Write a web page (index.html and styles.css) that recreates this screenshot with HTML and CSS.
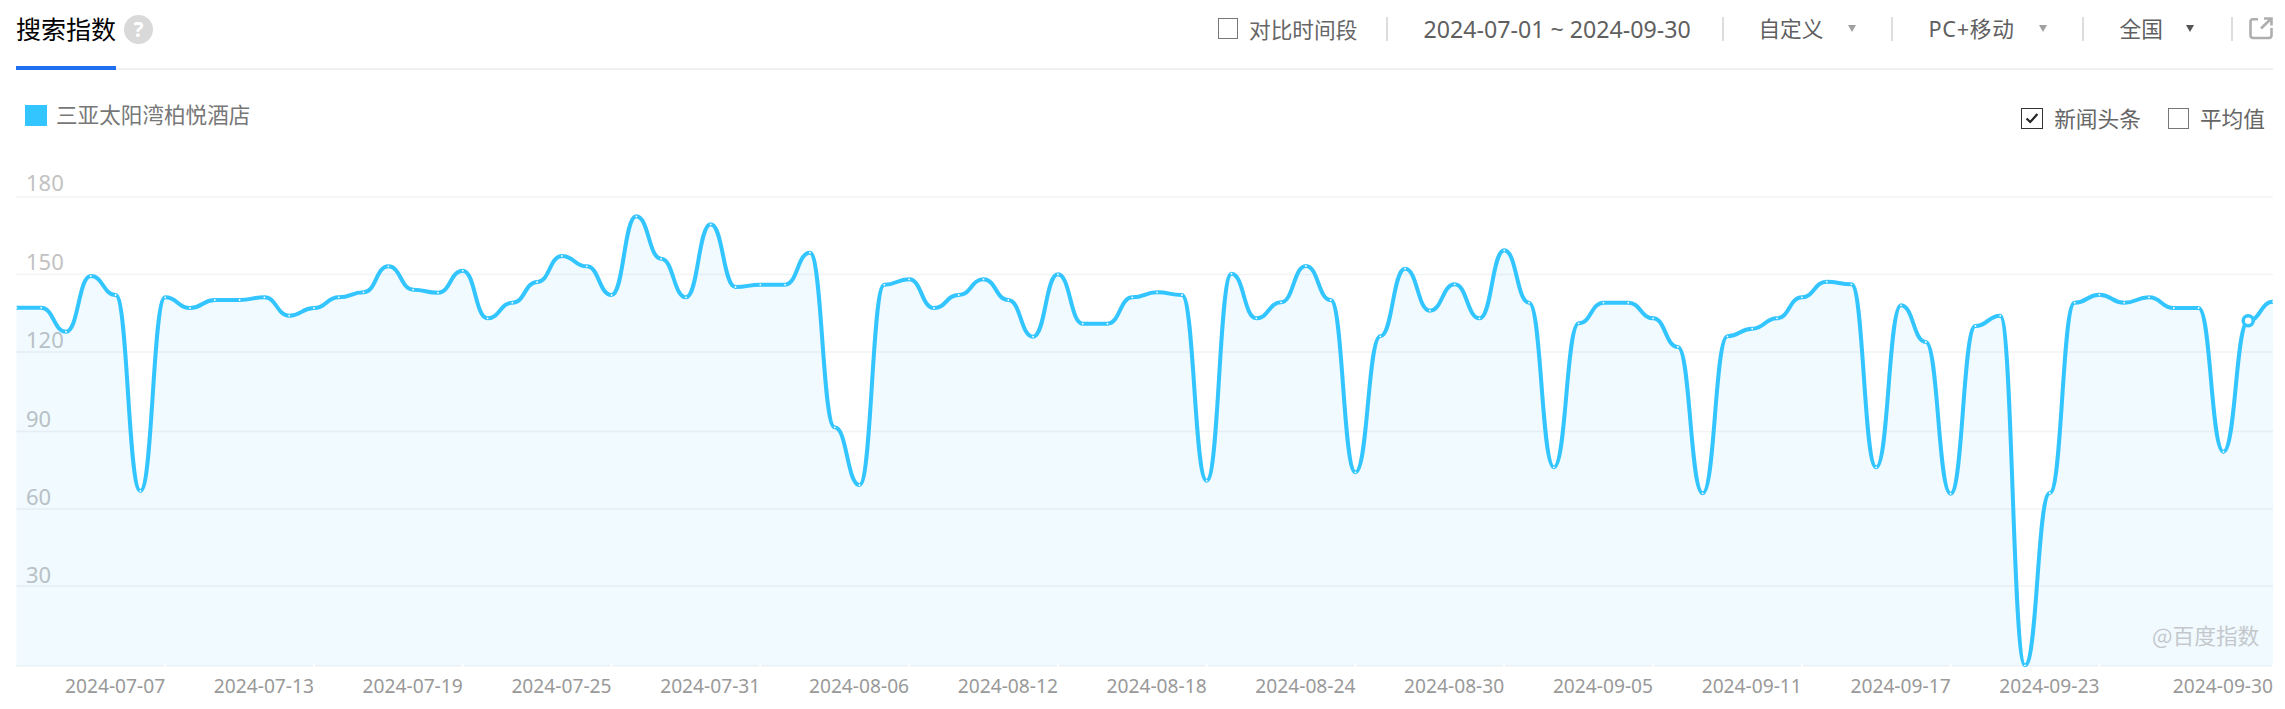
FILE: index.html
```html
<!DOCTYPE html>
<html lang="zh-CN">
<head>
<meta charset="utf-8">
<title>搜索指数</title>
<link rel="stylesheet" href="styles.css">
</head>
<body>
<div class="page">
  <header class="head">
    <div class="tab">搜索指数</div>
    <span class="help">?</span>
    <div class="controls">
      <span class="box"></span>
      <span class="ctl-label">对比时间段</span>
      <span class="sep sep-a"></span>
      <span class="date">2024-07-01 ~ 2024-09-30</span>
      <span class="sep sep-b"></span>
      <span class="ctl-text">自定义</span>
      <span class="caret"></span>
      <span class="sep sep-c"></span>
      <span class="ctl-text ctl-wide">PC+移动</span>
      <span class="caret"></span>
      <span class="sep sep-c"></span>
      <span class="ctl-text">全国</span>
      <span class="caret caret-dark"></span>
      <span class="sep sep-d"></span>
      <svg class="share" viewBox="0 0 24 23" width="24" height="23">
        <path class="share-line" d="M9 2.2H4A2.5 2.5 0 0 0 1.5 4.7V18.5A2.5 2.5 0 0 0 4 21H20A2.5 2.5 0 0 0 22.5 18.5V11"/>
        <path class="share-line" d="M12 11.5L22 1.8M15 1.5H22.5V8.5"/>
      </svg>
    </div>
  </header>
  <div class="legend-row">
    <div class="legend">
      <span class="swatch"></span>
      <span class="legend-text">三亚太阳湾柏悦酒店</span>
    </div>
    <div class="options">
      <span class="box box-dark">
        <svg viewBox="0 0 20 20" width="18" height="18"><path class="tick" d="M4 10.5L8 14.5L16 5.5"/></svg>
      </span>
      <span class="opt-text">新闻头条</span>
      <span class="box box-second"></span>
      <span class="opt-text">平均值</span>
    </div>
  </div>
  <svg id="chart" class="chart" viewBox="16 160 2257 549" width="2257" height="549">
    <g class="grid">
      <line x1="16" x2="2273" y1="197" y2="197"/>
      <line x1="16" x2="2273" y1="274.5" y2="274.5"/>
      <line x1="16" x2="2273" y1="352" y2="352"/>
      <line x1="16" x2="2273" y1="431.5" y2="431.5"/>
      <line x1="16" x2="2273" y1="509" y2="509"/>
      <line x1="16" x2="2273" y1="586" y2="586"/>
      <line x1="16" x2="2273" y1="666" y2="666"/>
    </g>
    <g class="ylabels">
      <text x="26" y="191">180</text>
      <text x="26" y="270">150</text>
      <text x="26" y="347.5">120</text>
      <text x="26" y="427">90</text>
      <text x="26" y="505">60</text>
      <text x="26" y="582.5">30</text>
    </g>
    <path id="area" class="area"/>
    <path id="line" class="line"/>
    <g id="dots" class="dots"></g>
    <text class="mark" x="2152" y="644">@百度指数</text>
    <g id="xlabels" class="xlabels"></g>
  </svg>
</div>
<script src="script.js"></script>
</body>
</html>
```
FILE: styles.css
```css
* { box-sizing: border-box; }
html, body { margin: 0; padding: 0; background: #fff; }
body { font-family: "Noto Sans", "Noto Sans CJK SC", sans-serif; color: #666; overflow: hidden; }
.page { width: 2285px; height: 709px; padding: 0 12px 0 16px; }

.head { display: flex; align-items: center; height: 70px; border-bottom: 2px solid #f0f0f0; }
.tab { width: 100px; height: 70px; margin-bottom: -2px; padding-top: 10px; font-size: 25px; line-height: 36px; color: #000; border-bottom: 4px solid #1f6ff0; font-family: "Noto Sans CJK SC", sans-serif; }
.help { display: block; width: 29px; height: 29px; margin: -9px 0 0 8px; border-radius: 50%; background: #d9d9d9; color: #fff; font-size: 21px; font-weight: 700; line-height: 29px; text-align: center; }

.controls { display: flex; align-items: center; margin-left: auto; height: 24px; margin-top: -11px; }
.box { display: flex; align-items: center; justify-content: center; width: 20px; height: 21px; border: 1.5px solid #777; background: #fff; }
.box-dark { width: 22px; border-color: #333; }
.box-second { margin-left: 27px; width: 21px; }
.ctl-label { margin-left: 11px; font-size: 21.7px; line-height: 30px; white-space: nowrap; font-family: "Noto Sans CJK SC", sans-serif; }
.sep { width: 2px; height: 24px; background: #ddd; }
.sep-a { margin-left: 29px; margin-right: 35px; }
.sep-b { margin-left: 31px; margin-right: 34px; }
.sep-c { margin-left: 35px; margin-right: 36px; }
.sep-d { margin-left: 37px; margin-right: 16px; }
.date { width: 268px; font-size: 23.2px; line-height: 30px; white-space: nowrap; color: #5f5f5f; }
.ctl-text { font-size: 21.7px; line-height: 30px; white-space: nowrap; color: #5f5f5f; }
.ctl-wide { letter-spacing: 0.7px; }
.caret { width: 0; height: 0; margin-left: 24px; border-left: 4px solid transparent; border-right: 4px solid transparent; border-top: 7px solid #a0a0a0; }
.caret-dark { margin-left: 23px; border-top-color: #555; }
.share { display: block; }
.share-line { fill: none; stroke: #aeaeae; stroke-width: 2.6; }

.legend-row { display: flex; justify-content: space-between; height: 90px; }
.legend { display: flex; align-items: center; height: 30px; margin-top: 30px; padding-left: 9px; }
.swatch { width: 22px; height: 21px; background: #33c5ff; }
.legend-text { margin: -2px 0 0 9px; font-size: 21.6px; line-height: 30px; color: #777; white-space: nowrap; font-family: "Noto Sans CJK SC", sans-serif; }
.options { display: flex; align-items: center; height: 30px; margin-top: 33px; margin-right: 8px; }
.opt-text { margin-left: 11px; font-size: 21.7px; line-height: 30px; color: #666; white-space: nowrap; font-family: "Noto Sans CJK SC", sans-serif; }
.tick { fill: none; stroke: #222; stroke-width: 2.4; }

.chart { display: block; overflow: hidden; }
.grid line { stroke: #f2f3f4; stroke-width: 1.6; }
.ylabels text { font-size: 22px; fill: #c2c2c2; }
.area { fill: rgba(60, 180, 255, 0.07); stroke: none; }
.line { fill: none; stroke: #33c5ff; stroke-width: 4; stroke-linejoin: round; }
.dots circle { fill: #fff; }
.dots .hot { fill: #fff; stroke: #33c5ff; stroke-width: 3.5; }
.mark { font-size: 21.7px; fill: #c4c8cc; font-family: "Noto Sans CJK SC", sans-serif; }
.xlabels text { font-size: 19.2px; fill: #999; text-anchor: end; }
.xlabels .gap { stroke: #fff; stroke-width: 2; }
```
FILE: script.js
```js
var ys = [
  307.7,307.7,331.7,276,295,491,297.3,308,300,300,297.3,315.7,308,297.3,292.3,266.3,289.7,292.7,270.7,318.3,302.7,282,256,
  266.3,295,216.3,258.7,297.3,224.3,287,284.7,284.7,252.7,427.3,485,284.7,279.3,308,295,279.3,300,336.7,274.3,323.7,323.7,297.3,
  292.3,295,480.7,273.7,318.3,302.3,266,300,472.3,336.3,268.7,310.7,284.3,318.3,250.3,302.7,467.3,323.3,302.7,302.7,318.3,347,493.3,
  336.3,328.7,318.3,297.3,281.7,284.3,467.3,305.3,342,493.7,326,315.7,665.3,493,302.7,294.7,302.7,297.3,308,308,451.7,320.7,301.7
];
var NS = "http://www.w3.org/2000/svg";
var x0 = 16.4, step = (2273 - x0) / 91;
var pts = ys.map(function (y, i) { return [x0 + i * step, y]; });
var f = function (n) { return n.toFixed(1); };

/* Curve monotone along x: flat tangent at every sample, control arms half a step long. */
var arm = step * 0.5;
var d = "M" + f(pts[0][0]) + " " + f(pts[0][1]);
for (var i = 1; i < pts.length; i++) {
  var a = pts[i - 1], b = pts[i];
  d += "C" + f(a[0] + arm) + " " + f(a[1]) + " " + f(b[0] - arm) + " " + f(b[1]) + " " + f(b[0]) + " " + f(b[1]);
}
document.getElementById("line").setAttribute("d", d);
document.getElementById("area").setAttribute("d", d + "L2273 666L16.4 666Z");

var dots = document.getElementById("dots");
pts.forEach(function (p, i) {
  var c = document.createElementNS(NS, "circle");
  c.setAttribute("cx", p[0]);
  c.setAttribute("cy", p[1]);
  c.setAttribute("r", i === 90 ? 5 : 0.9);
  if (i === 90) c.setAttribute("class", "hot");
  dots.appendChild(c);
});

var labels = [[6,"07-07"],[12,"07-13"],[18,"07-19"],[24,"07-25"],[30,"07-31"],[36,"08-06"],[42,"08-12"],[48,"08-18"],[54,"08-24"],[60,"08-30"],[66,"09-05"],[72,"09-11"],[78,"09-17"],[84,"09-23"],[91,"09-30"]];
var xl = document.getElementById("xlabels");
labels.forEach(function (l) {
  var x = x0 + l[0] * step;
  var gap = document.createElementNS(NS, "line");
  gap.setAttribute("class", "gap");
  gap.setAttribute("x1", x); gap.setAttribute("x2", x);
  gap.setAttribute("y1", 664); gap.setAttribute("y2", 668);
  xl.appendChild(gap);
  var t = document.createElementNS(NS, "text");
  t.setAttribute("x", x);
  t.setAttribute("y", 693);
  t.textContent = "2024-" + l[1];
  xl.appendChild(t);
});
```
